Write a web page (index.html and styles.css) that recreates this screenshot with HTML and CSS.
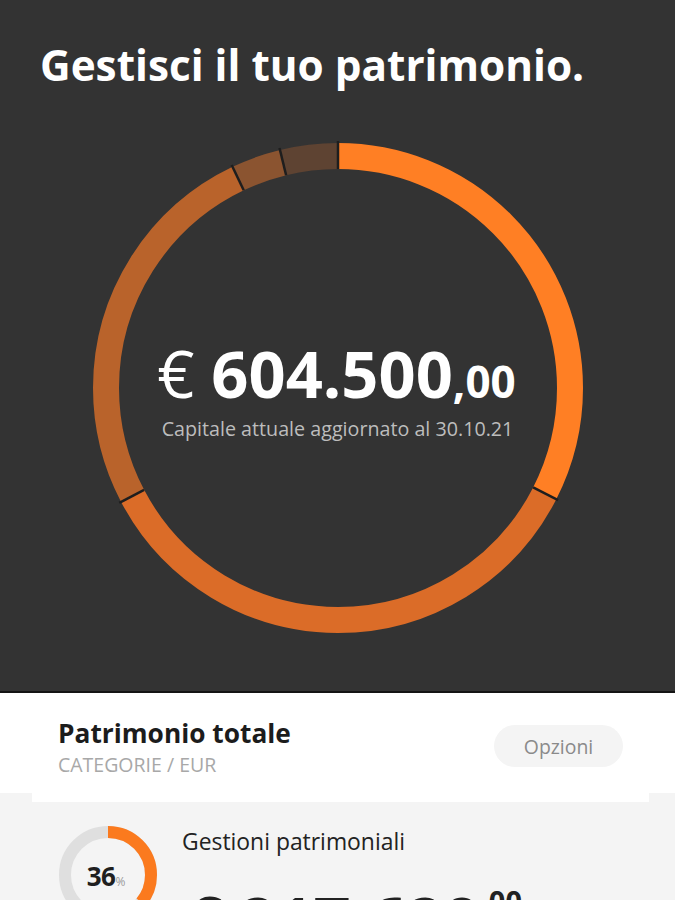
FILE: index.html
```html
<!DOCTYPE html>
<html lang="it">
<head>
<meta charset="utf-8">
<title>Gestisci il tuo patrimonio</title>
<link rel="stylesheet" href="styles.css">
</head>
<body>
<section class="hero">
  <h1 class="hero-title">Gestisci il tuo patrimonio.</h1>
  <div class="donut-wrap">
    <svg class="donut" width="490" height="490" viewBox="0 0 490 490">
      <g transform="rotate(-90 245 245)" fill="none" stroke-width="26">
        <circle cx="245" cy="245" r="232" stroke="#ff7f24" pathLength="360" stroke-dasharray="117 243" stroke-dashoffset="0"/>
        <circle cx="245" cy="245" r="232" stroke="#db6c28" pathLength="360" stroke-dasharray="125.3 234.7" stroke-dashoffset="-117"/>
        <circle cx="245" cy="245" r="232" stroke="#b9632b" pathLength="360" stroke-dasharray="92.2 267.8" stroke-dashoffset="-242.3"/>
        <circle cx="245" cy="245" r="232" stroke="#8b5430" pathLength="360" stroke-dasharray="11.8 348.2" stroke-dashoffset="-334.5"/>
        <circle cx="245" cy="245" r="232" stroke="#5e4332" pathLength="360" stroke-dasharray="13.7 346.3" stroke-dashoffset="-346.3"/>
      </g>
      <g stroke="#1e1e1e" stroke-width="2.5">
        <line x1="245" y1="-2" x2="245" y2="26" transform="rotate(0 245 245)"/>
        <line x1="245" y1="-2" x2="245" y2="26" transform="rotate(117 245 245)"/>
        <line x1="245" y1="-2" x2="245" y2="26" transform="rotate(242.3 245 245)"/>
        <line x1="245" y1="-2" x2="245" y2="26" transform="rotate(334.5 245 245)"/>
        <line x1="245" y1="-2" x2="245" y2="26" transform="rotate(346.3 245 245)"/>
      </g>
    </svg>
    <div class="donut-center">
      <div class="hero-amount"><span class="cur">€</span> <span class="int">604.500</span><span class="dec">,00</span></div>
      <div class="hero-caption">Capitale attuale aggiornato al 30.10.21</div>
    </div>
  </div>
</section>

<section class="summary">
  <div class="summary-head">
    <div class="summary-text">
      <div class="summary-title">Patrimonio totale</div>
      <div class="summary-sub">CATEGORIE / EUR</div>
    </div>
    <button class="btn-options">Opzioni</button>
  </div>
  <div class="summary-tab"></div>
</section>

<section class="list">
  <div class="list-item">
    <div class="mini-donut">
      <svg width="100" height="100" viewBox="0 0 100 100">
        <circle cx="50" cy="50" r="43" fill="none" stroke="#dfdfdf" stroke-width="12"/>
        <circle cx="50" cy="50" r="43" fill="none" stroke="#fb7a1e" stroke-width="12" pathLength="100" stroke-dasharray="36 64" transform="rotate(-90 50 50)"/>
      </svg>
      <div class="mini-label"><span class="pct">36</span><span class="pct-sign">%</span></div>
    </div>
    <div class="item-text">
      <div class="item-name">Gestioni patrimoniali</div>
      <div class="item-amount"><span class="cur">€</span> <span class="int">217.620</span><sup class="dec">,00</sup></div>
    </div>
  </div>
</section>
</body>
</html>
```

FILE: styles.css
```css
* { box-sizing: border-box; }

html, body {
  margin: 0;
  padding: 0;
}

body {
  background: #f4f4f4;
  font-family: "Open Sans", "Noto Sans", sans-serif;
  color: #222;
  width: 675px;
}

.hero {
  background: #333333;
  height: 693px;
  border-bottom: 2px solid #141414;
  padding-top: 40px;
}

.hero-title {
  margin: 0 0 0 40px;
  color: #fff;
  font-weight: 700;
  font-size: 42.3px;
  line-height: 50px;
  letter-spacing: 0;
}

.donut-wrap {
  display: grid;
  width: 490px;
  height: 490px;
  margin: 53px auto 0;
}

.donut,
.donut-center {
  grid-area: 1 / 1;
}

.donut { display: block; overflow: visible; }

.donut-center {
  display: flex;
  flex-direction: column;
  align-items: center;
  justify-content: center;
  color: #fff;
  padding-top: 4px;
}

.hero-amount {
  font-size: 65px;
  line-height: 70px;
  font-weight: 700;
  white-space: nowrap;
  margin-left: -2px;
}

.hero-amount .cur { font-weight: 400; }
.hero-amount .dec { font-size: 44px; }

.hero-caption {
  margin-top: 0;
  font-size: 19.7px;
  line-height: 26px;
  color: #bdbdbd;
}

.summary {
  background: #fff;
}

.summary-head {
  height: 100px;
  display: flex;
  align-items: center;
  justify-content: space-between;
  padding: 0 52px 0 58px;
}

.summary-text {
  align-self: flex-start;
  padding-top: 24px;
}

.summary-title {
  font-size: 26.3px;
  font-weight: 700;
  line-height: 32px;
  color: #1c1c1c;
}

.summary-sub {
  font-size: 19.5px;
  line-height: 26px;
  color: #a8a8a8;
  margin-top: 3px;
}

.btn-options {
  font-family: inherit;
  border: 0;
  background: #f4f4f4;
  color: #8a8a8a;
  font-size: 19.4px;
  width: 129px;
  height: 42px;
  border-radius: 21px;
  margin-top: 6px;
  padding: 0;
}

.summary-tab {
  height: 9px;
  display: flex;
  background: #f4f4f4;
}

.summary-tab::before {
  content: "";
  display: block;
  background: #fff;
  margin: 0 26px 0 32px;
  flex: 1;
}

.list {
  padding: 23px 0 0 58px;
}

.list-item {
  display: flex;
  gap: 24px;
  align-items: flex-start;
}

.mini-donut {
  display: grid;
  width: 100px;
  height: 100px;
  flex: none;
}

.mini-donut svg,
.mini-label {
  grid-area: 1 / 1;
}

.mini-label {
  display: flex;
  align-items: baseline;
  justify-content: center;
  padding-top: 33px;
  padding-right: 4px;
}

.pct {
  font-size: 26px;
  font-weight: 700;
  color: #1f1f1f;
  letter-spacing: -0.5px;
}

.pct-sign {
  font-size: 12px;
  color: #9a9a9a;
}

.item-text {
  padding-top: 2px;
}

.item-name {
  font-size: 22.9px;
  line-height: 30px;
  color: #222;
}

.item-amount {
  margin-top: 27px;
  font-size: 65px;
  line-height: 70px;
  font-weight: 700;
  color: #222;
  white-space: nowrap;
  margin-left: 3px;
}

.item-amount .cur { font-weight: 400; }

.item-amount .dec {
  font-size: 29px;
  vertical-align: top;
  position: relative;
  top: 2px;
  line-height: 1;
}
```
